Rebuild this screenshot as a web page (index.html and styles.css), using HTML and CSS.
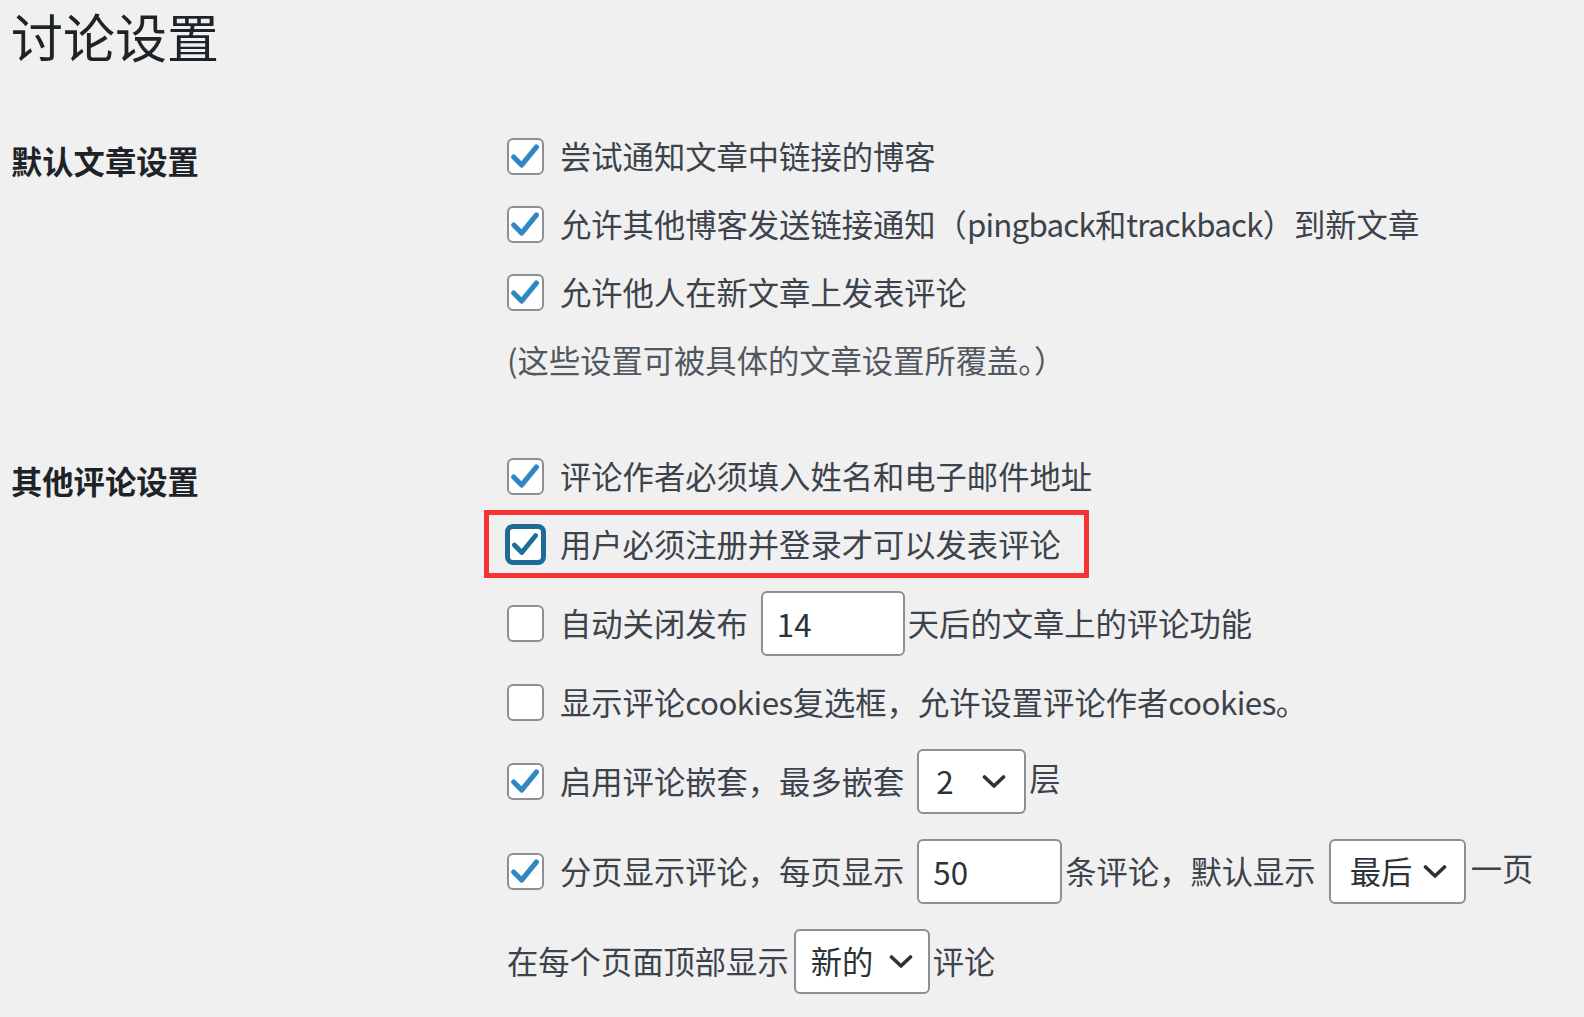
FILE: index.html
```html
<!DOCTYPE html>
<html lang="zh-CN">
<head>
<meta charset="utf-8">
<title>讨论设置</title>
<link rel="stylesheet" href="styles.css">
</head>
<body>
<div class="page">
  <h1 class="title">讨论设置</h1>

  <div class="section">
    <div class="label">默认文章设置</div>
    <div class="opts">
      <div class="row">
        <span class="cb"><svg viewBox="0 0 32 32"><path d="M4.5 16.5 L12.2 24.3 L26.5 6.8"/></svg></span>
        <span>尝试通知文章中链接的博客</span>
      </div>
      <div class="row">
        <span class="cb"><svg viewBox="0 0 32 32"><path d="M4.5 16.5 L12.2 24.3 L26.5 6.8"/></svg></span>
        <span>允许其他博客发送链接通知（<span class="lat">pingback</span>和<span class="lat">trackback</span>）到新文章</span>
      </div>
      <div class="row">
        <span class="cb"><svg viewBox="0 0 32 32"><path d="M4.5 16.5 L12.2 24.3 L26.5 6.8"/></svg></span>
        <span>允许他人在新文章上发表评论</span>
      </div>
      <div class="row note">(这些设置可被具体的文章设置所覆盖。）</div>
    </div>
  </div>

  <div class="section second">
    <div class="label">其他评论设置</div>
    <div class="opts">
      <div class="row">
        <span class="cb"><svg viewBox="0 0 32 32"><path d="M4.5 16.5 L12.2 24.3 L26.5 6.8"/></svg></span>
        <span>评论作者必须填入姓名和电子邮件地址</span>
      </div>
      <div class="row highlight">
        <span class="cb focus"><svg viewBox="0 0 32 32"><path d="M4.5 16.5 L12.2 24.3 L26.5 6.8"/></svg></span>
        <span>用户必须注册并登录才可以发表评论</span>
      </div>
      <div class="row field">
        <span class="cb empty"></span>
        <span>自动关闭发布</span>
        <input class="txt w144" type="text" value="14">
        <span>天后的文章上的评论功能</span>
      </div>
      <div class="row">
        <span class="cb empty"></span>
        <span>显示评论<span class="lat2">cookies</span>复选框，允许设置评论作者<span class="lat2">cookies</span>。</span>
      </div>
      <div class="row field">
        <span class="cb"><svg viewBox="0 0 32 32"><path d="M4.5 16.5 L12.2 24.3 L26.5 6.8"/></svg></span>
        <span>启用评论嵌套，最多嵌套</span>
        <span class="sel sel-depth"><span>2</span><svg class="chev" viewBox="0 0 24 15"><path d="M2.5 3 L12 12 L21.5 3"/></svg></span>
        <span class="raised after">层</span>
      </div>
      <div class="row field">
        <span class="cb"><svg viewBox="0 0 32 32"><path d="M4.5 16.5 L12.2 24.3 L26.5 6.8"/></svg></span>
        <span>分页显示评论，每页显示</span>
        <input class="txt w145" type="text" value="50">
        <span>条评论，默认显示</span>
        <span class="sel sel-page"><span>最后</span><svg class="chev" viewBox="0 0 24 15"><path d="M2.5 3 L12 12 L21.5 3"/></svg></span>
        <span class="raised after2">一页</span>
      </div>
      <div class="row field">
        <span>在每个页面顶部显示</span>
        <span class="sel sel-order"><span>新的</span><svg class="chev" viewBox="0 0 24 15"><path d="M2.5 3 L12 12 L21.5 3"/></svg></span>
        <span class="after">评论</span>
      </div>
    </div>
  </div>
</div>
</body>
</html>
```

FILE: styles.css
```css
html, body {
  margin: 0;
  padding: 0;
}

body {
  background: #f0f0f1;
  color: #3c434a;
  font-family: "Noto Sans CJK SC", "Noto Sans", sans-serif;
  overflow: hidden;
}

.page {
  padding: 10px 0 0 11px;
}

.title {
  margin: 0;
  font-size: 52px;
  line-height: 52px;
  font-weight: 400;
  color: #1d2327;
}

.section {
  display: grid;
  grid-template-columns: 496px 1fr;
  margin-top: 60px;
}

.section.second {
  margin-top: 48px;
}

.label {
  font-size: 31.3px;
  line-height: 34px;
  font-weight: 700;
  padding-top: 22px;
  color: #1d2327;
}

.row {
  display: flex;
  align-items: center;
  height: 68px;
  font-size: 31.3px;
  line-height: 40px;
  white-space: nowrap;
}

.row.field {
  height: 90px;
}

.row.note {
  color: #50575e;
}

.lat {
  letter-spacing: -0.8px;
}

.lat2 {
  letter-spacing: -0.5px;
}

.row.highlight {
  box-sizing: border-box;
  width: 605px;
  margin-left: -23px;
  padding-left: 18px;
  border: 5px solid #f73232;
}

.cb {
  flex: none;
  box-sizing: border-box;
  width: 37px;
  height: 37px;
  margin-right: 16px;
  border: 2.5px solid #8c8f94;
  border-radius: 6px;
  background: #fff;
  display: flex;
}

.cb svg {
  width: 100%;
  height: 100%;
}

.cb svg path {
  fill: none;
  stroke: #2f87c3;
  stroke-width: 5;
  stroke-linecap: round;
  stroke-linejoin: round;
}

.cb.focus {
  border-color: #1e6c95;
  border-width: 3px;
  box-shadow: 0 0 0 2px #1e6c95;
}

.cb.focus svg path {
  stroke: #1f6e98;
}

.txt {
  flex: none;
  box-sizing: border-box;
  height: 65px;
  margin: 0 3px 0 13px;
  padding: 0 0 0 14px;
  border: 2px solid #8c8f94;
  border-radius: 6px;
  background: #fff;
  color: #2c3338;
  font-family: "Noto Sans CJK SC", "Noto Sans", sans-serif;
  font-size: 31.3px;
  outline: none;
}

.w144 { width: 144px; }
.w145 { width: 145px; }

.sel {
  flex: none;
  box-sizing: border-box;
  height: 65px;
  display: flex;
  align-items: center;
  justify-content: space-between;
  border: 2px solid #8c8f94;
  border-radius: 6px;
  background: #fff;
  color: #2c3338;
}

.sel-depth {
  width: 109px;
  margin-left: 13px;
  padding: 0 18px 0 17px;
}

.sel-page {
  width: 137px;
  margin-left: 13px;
  padding: 0 17px 0 19px;
}

.sel-order {
  width: 136px;
  margin-left: 5px;
  padding: 0 15px 0 15px;
}

.chev {
  width: 24px;
  height: 15px;
  flex: none;
}

.chev path {
  fill: none;
  stroke: #2c3338;
  stroke-width: 3.6;
  stroke-linecap: round;
  stroke-linejoin: round;
}

.after {
  margin-left: 3px;
}

.after2 {
  margin-left: 5px;
}

.raised {
  margin-bottom: 6px;
}
```
